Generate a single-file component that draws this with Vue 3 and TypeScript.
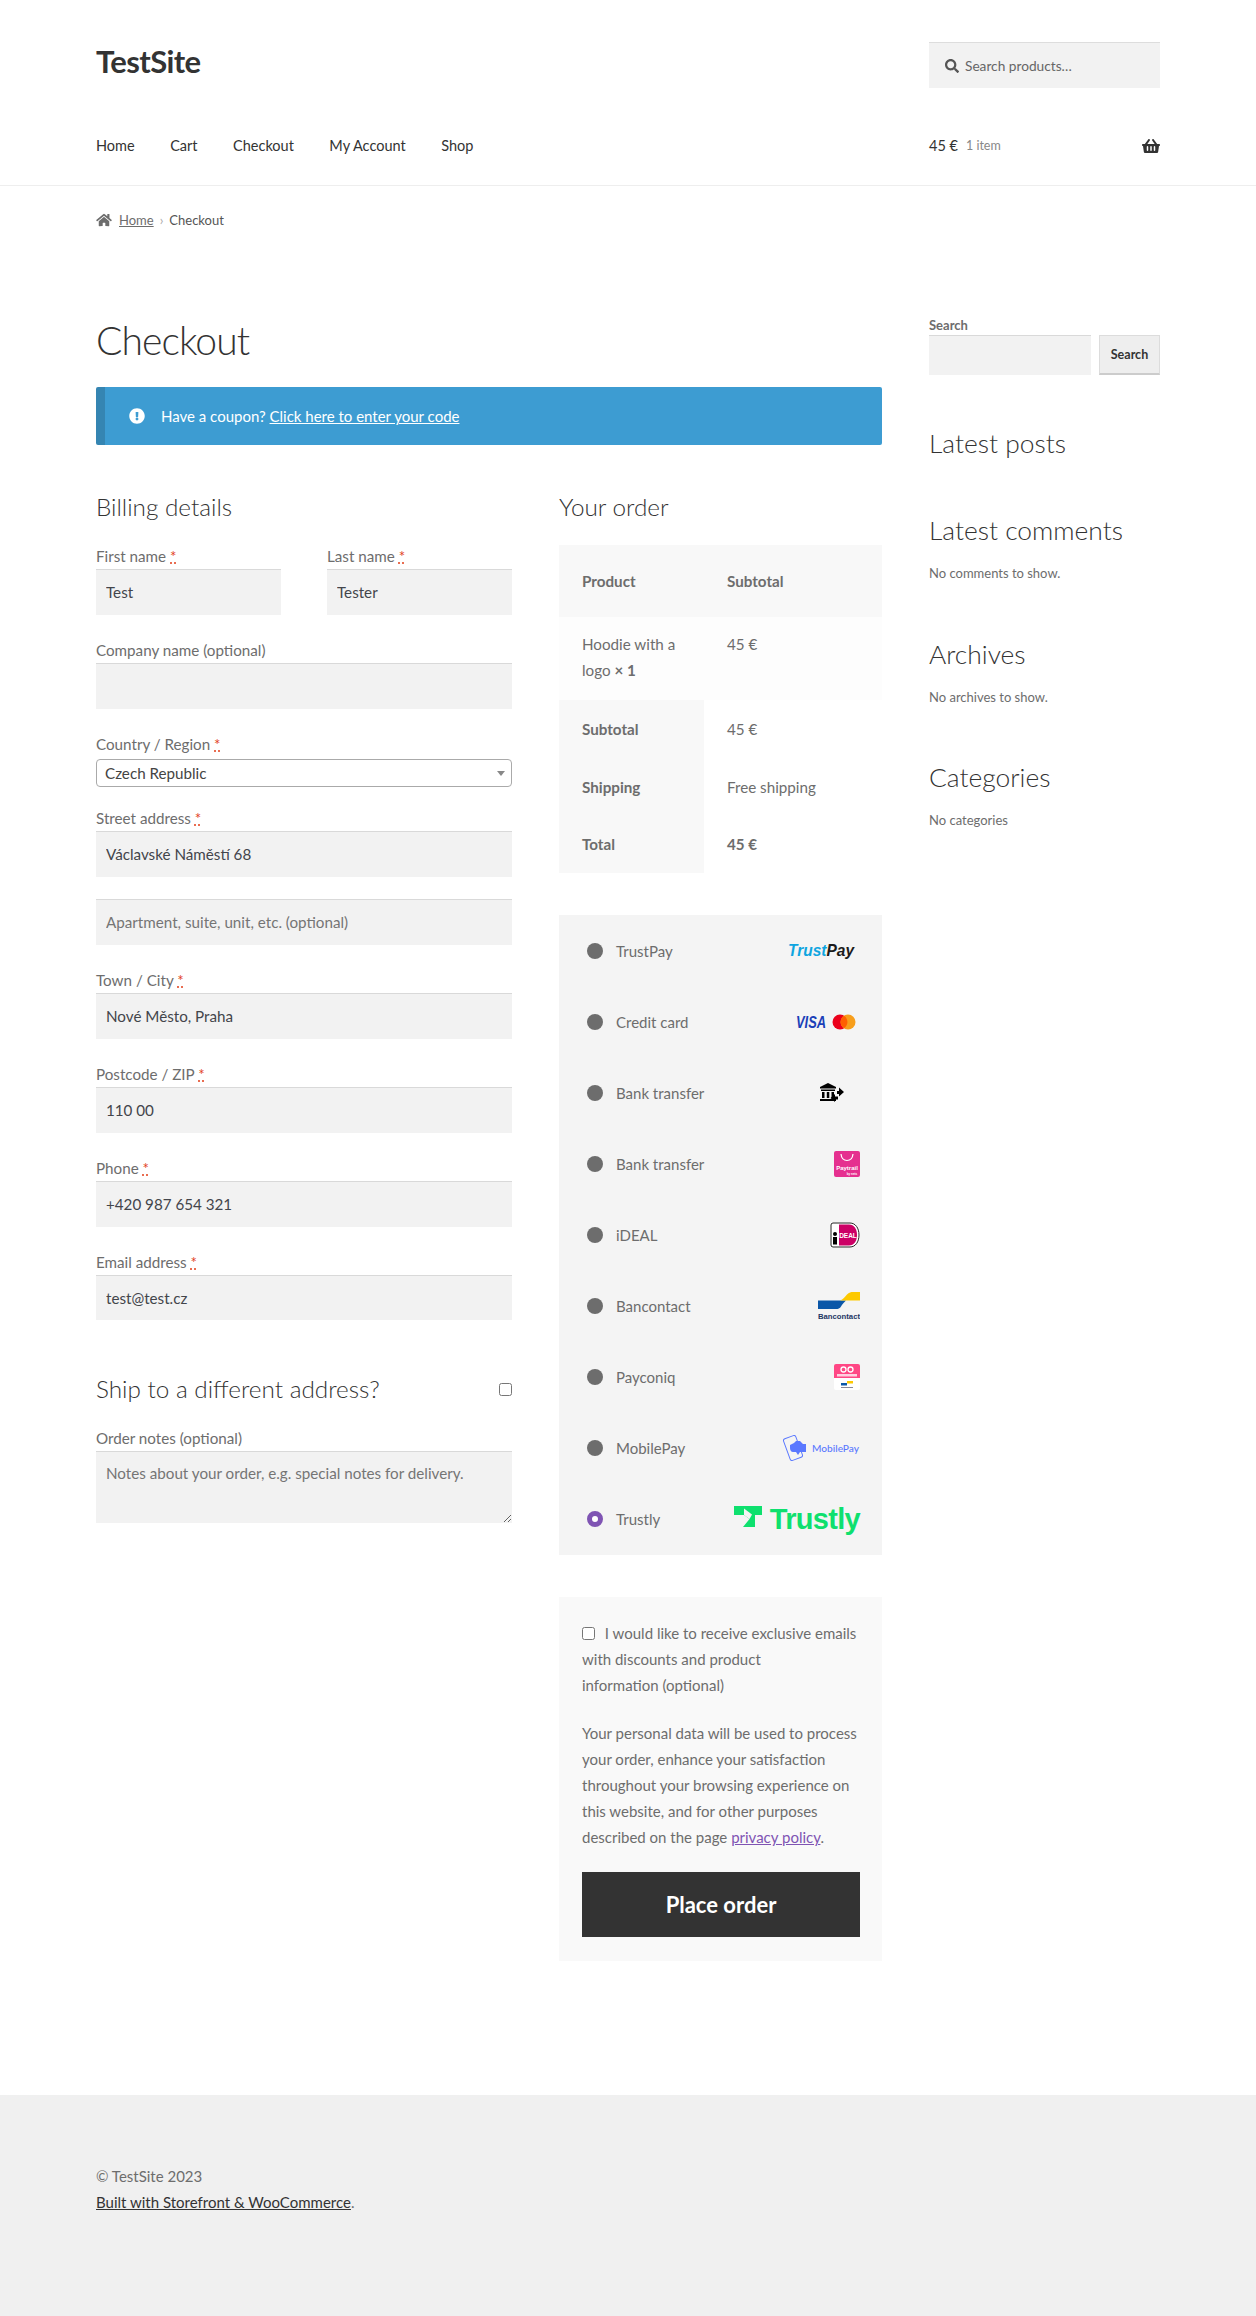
<script setup lang="ts">
interface Field {
  label: string
  required?: boolean
  value?: string
  placeholder?: string
}
const navItems: string[] = ['Home', 'Cart', 'Checkout', 'My Account', 'Shop']
const afterAddress: Field[] = [
  { label: 'Town / City', required: true, value: 'Nové Město, Praha' },
  { label: 'Postcode / ZIP', required: true, value: '110 00' },
  { label: 'Phone', required: true, value: '+420 987 654 321' },
  { label: 'Email address', required: true, value: 'test@test.cz' }
]
const methods: string[] = ['TrustPay', 'Credit card', 'Bank transfer', 'Bank transfer', 'iDEAL', 'Bancontact', 'Payconiq', 'MobilePay', 'Trustly']
</script>

<template>
  <div class="page">
    <header class="site-header">
      <div class="wrap brand-row">
        <div class="logo">TestSite</div>
        <div class="search-box">
          <svg class="ic-search" viewBox="0 0 512 512"><path d="M505 442.7L405.3 343c-4.5-4.5-10.6-7-17-7H372c27.6-35.3 44-79.7 44-128C416 93.1 322.9 0 208 0S0 93.1 0 208s93.1 208 208 208c48.3 0 92.7-16.4 128-44v16.3c0 6.4 2.5 12.5 7 17l99.7 99.7c9.4 9.4 24.6 9.4 33.9 0l28.3-28.3c9.4-9.4 9.4-24.6.1-34zM208 336c-70.7 0-128-57.2-128-128 0-70.7 57.2-128 128-128 70.7 0 128 57.2 128 128 0 70.7-57.2 128-128 128z"/></svg>
          <span>Search products…</span>
        </div>
      </div>
      <div class="wrap nav-row">
        <nav class="nav"><a v-for="n in navItems" :key="n">{{ n }}</a></nav>
        <div class="cart">
          <span class="amount">45 €</span><span class="count">1 item</span>
          <svg class="ic-basket" viewBox="0 0 576 512"><path d="M576 216v16c0 13.255-10.745 24-24 24h-8l-26.113 182.788C514.509 462.435 494.257 480 470.37 480H105.63c-23.887 0-44.139-17.565-47.518-41.212L32 256h-8c-13.255 0-24-10.745-24-24v-16c0-13.255 10.745-24 24-24h67.341l106.78-146.821c10.395-14.292 30.407-17.453 44.701-7.058 14.293 10.395 17.453 30.408 7.058 44.701L170.477 192h235.046L326.12 82.821c-10.395-14.292-7.234-34.306 7.059-44.701 14.291-10.395 34.306-7.235 44.701 7.058L484.659 192H552c13.255 0 24 10.745 24 24zM312 392V280c0-13.255-10.745-24-24-24s-24 10.745-24 24v112c0 13.255 10.745 24 24 24s24-10.745 24-24zm112 0V280c0-13.255-10.745-24-24-24s-24 10.745-24 24v112c0 13.255 10.745 24 24 24s24-10.745 24-24zm-224 0V280c0-13.255-10.745-24-24-24s-24 10.745-24 24v112c0 13.255 10.745 24 24 24s24-10.745 24-24z"/></svg>
        </div>
      </div>
    </header>

    <div class="wrap crumbs">
      <svg class="ic-home" viewBox="0 0 576 512"><path d="M280.37 148.26L96 300.11V464a16 16 0 0 0 16 16l112.06-.29a16 16 0 0 0 15.92-16V368a16 16 0 0 1 16-16h64a16 16 0 0 1 16 16v95.64a16 16 0 0 0 16 16.05L464 480a16 16 0 0 0 16-16V300L295.67 148.26a12.19 12.19 0 0 0-15.3 0zM571.6 251.47L488 182.56V44.05a12 12 0 0 0-12-12h-56a12 12 0 0 0-12 12v72.61L318.47 43a48 48 0 0 0-61 0L4.34 251.47a12 12 0 0 0-1.6 16.9l25.5 31A12 12 0 0 0 45.15 301l235.22-193.74a12.19 12.19 0 0 1 15.3 0L530.9 301a12 12 0 0 0 16.9-1.6l25.5-31a12 12 0 0 0-1.7-16.93z"/></svg>
      <a>Home</a><span class="sep">›</span><span>Checkout</span>
    </div>

    <div class="wrap columns">
      <main class="content">
        <h1>Checkout</h1>
        <div class="notice">
          <svg class="ic-info" viewBox="0 0 512 512"><path d="M504 256c0 136.997-111.043 248-248 248S8 392.997 8 256C8 119.083 119.043 8 256 8s248 111.083 248 248zm-248 50c-25.405 0-46 20.595-46 46s20.595 46 46 46 46-20.595 46-46-20.595-46-46-46zm-43.673-165.346l7.418 136c.347 6.364 5.609 11.346 11.982 11.346h48.546c6.373 0 11.635-4.982 11.982-11.346l7.418-136c.375-6.874-5.098-12.654-11.982-12.654h-63.383c-6.884 0-12.356 5.78-11.981 12.654z"/></svg>
          <span>Have a coupon? <a>Click here to enter your code</a></span>
        </div>

        <div class="checkout">
          <section class="billing">
            <h3>Billing details</h3>
            <div class="name-row">
              <div class="field">
                <label>First name <abbr>*</abbr></label>
                <input class="text" value="Test" />
              </div>
              <div class="field">
                <label>Last name <abbr>*</abbr></label>
                <input class="text" value="Tester" />
              </div>
            </div>
            <div class="field">
              <label>Company name (optional)</label>
              <input class="text" />
            </div>
            <div class="field country">
              <label>Country / Region <abbr>*</abbr></label>
              <div class="select-wrap">
                <select class="select"><option>Czech Republic</option></select>
              </div>
            </div>
            <div class="field street">
              <label>Street address <abbr>*</abbr></label>
              <input class="text" value="Václavské Náměstí 68" />
              <input class="text second" placeholder="Apartment, suite, unit, etc. (optional)" />
            </div>
            <div v-for="f in afterAddress" :key="f.label" class="field">
              <label>{{ f.label }} <abbr v-if="f.required">*</abbr></label>
              <input class="text" :value="f.value" />
            </div>
            <div class="ship">
              <h3>Ship to a different address?</h3>
              <input type="checkbox" class="check" />
            </div>
            <div class="field notes">
              <label>Order notes (optional)</label>
              <textarea class="text area" placeholder="Notes about your order, e.g. special notes for delivery."></textarea>
            </div>
          </section>

          <section class="order">
            <h3>Your order</h3>
            <table class="table">
              <thead>
                <tr><th>Product</th><th>Subtotal</th></tr>
              </thead>
              <tbody>
                <tr class="item"><td>Hoodie with a logo <strong>× 1</strong></td><td>45 €</td></tr>
              </tbody>
              <tfoot>
                <tr><th>Subtotal</th><td>45 €</td></tr>
                <tr><th>Shipping</th><td>Free shipping</td></tr>
                <tr><th>Total</th><td><strong>45 €</strong></td></tr>
              </tfoot>
            </table>

            <ul class="methods">
              <li v-for="(m, i) in methods" :key="i" class="method">
                <span class="radio" :class="{ on: i === 8 }"></span>
                <span class="m-label">{{ m }}</span>
                <svg v-if="i === 0" class="logo-svg" width="72" height="24" viewBox="0 0 72 24">
                  <text x="0" y="17" class="tp" textLength="66" lengthAdjust="spacingAndGlyphs"><tspan fill="#0ea5e0">Trust</tspan><tspan fill="#1b1b1b">Pay</tspan></text>
                </svg>
                <svg v-else-if="i === 1" class="logo-svg" width="64" height="20" viewBox="0 0 64 20">
                  <text x="0" y="15.500" class="visa" textLength="30" lengthAdjust="spacingAndGlyphs">VISA</text>
                  <circle cx="44" cy="10" r="7.500" fill="#eb001b"/>
                  <circle cx="52" cy="10" r="7.500" fill="#f79e1b"/>
                  <path d="M48 3.700a7.500 7.500 0 0 1 0 12.600a7.500 7.500 0 0 1 0-12.600z" fill="#ff5f00"/>
                </svg>
                <svg v-else-if="i === 2" class="logo-svg" width="40" height="20" viewBox="0 0 40 20">
                  <path d="M8 0l8 4v1.500H0V4zM1 6.500h14V8H1zM2 9h2.500v6H2zM6.800 9h2.500v6H6.800zM11.500 9H14v6h-2.500zM0 16h16v2H0z" fill="#000"/>
                  <path d="M17 8h2V4.500l5 4.500-5 4.500V11h-2zM18 13.500h-3V11l-4.500 4 4.500 4v-2.500h3z" fill="#000"/>
                </svg>
                <svg v-else-if="i === 3" class="logo-svg" width="26" height="26" viewBox="0 0 26 26">
                  <rect width="26" height="26" rx="2" fill="#e5308f"/>
                  <path d="M7 3c.5 5 3 6.500 6 6.500s5.500-1.500 6-6.500" fill="none" stroke="#fff" stroke-width="1.200"/>
                  <text x="13" y="19" class="pt">Paytrail</text>
                  <text x="18" y="24" class="pt2">by nets</text>
                </svg>
                <svg v-else-if="i === 4" class="logo-svg" width="30" height="26" viewBox="0 0 30 26">
                  <path d="M0 2a2 2 0 0 1 2-2h18c6 0 10 5 10 13s-4 13-10 13H2a2 2 0 0 1-2-2z" fill="#fff"/>
                  <path d="M1 3a2 2 0 0 1 2-2h17c5.500 0 9 5 9 12s-3.500 12-9 12H3a2 2 0 0 1-2-2z" fill="none" stroke="#222" stroke-width="1"/>
                  <path d="M9 2.500h10c5 0 8 4.500 8 10.500s-3 10.500-8 10.500H9z" fill="#cc0066"/>
                  <text x="18" y="15.500" class="id">DEAL</text>
                  <circle cx="5" cy="12" r="2" fill="#000"/>
                  <rect x="3" y="15" width="4" height="7.500" fill="#000"/>
                </svg>
                <svg v-else-if="i === 5" class="logo-svg" width="42" height="27" viewBox="0 0 42 27">
                  <path d="M0 8.500H28c-2 2-4 4-5 6-1 2-3 2.500-5 2.500H0z" fill="#0b57a8"/>
                  <path d="M42 0v8.500H22c3-1 5-4 7-6 2-2 4-2.500 6-2.500z" fill="#fdc900"/>
                  <text x="0" y="26.500" class="bc" textLength="42" lengthAdjust="spacingAndGlyphs">Bancontact</text>
                </svg>
                <svg v-else-if="i === 6" class="logo-svg" width="26" height="26" viewBox="0 0 26 26">
                  <path d="M2 0h22a2 2 0 0 1 2 2v14H0V2a2 2 0 0 1 2-2z" fill="#ff4785"/>
                  <path d="M0 14h26v10a2 2 0 0 1-2 2H2a2 2 0 0 1-2-2z" fill="#fff"/>
                  <circle cx="9.500" cy="5.500" r="2.500" fill="none" stroke="#fff" stroke-width="1.300"/>
                  <circle cx="16.500" cy="5.500" r="2.500" fill="none" stroke="#fff" stroke-width="1.300"/>
                  <rect x="3" y="10" width="20" height="2.500" fill="#ffd0e0"/>
                  <rect x="7" y="19" width="6" height="2.500" fill="#0b57a8"/>
                  <rect x="13" y="17" width="6" height="2.500" fill="#fdc900"/>
                  <rect x="7" y="23" width="12" height="1" fill="#889"/>
                </svg>
                <svg v-else-if="i === 7" class="logo-svg" width="78" height="26" viewBox="0 0 78 26">
                  <rect x="4.500" y="1.500" width="13" height="23" rx="2" transform="rotate(-20 11 13)" fill="none" stroke="#5a78ff" stroke-width="1"/>
                  <path d="M8 10l4-2 2-2h4l3 3h3v8h-6l-2 3-2-3h-3c-2 0-3-2-3-4z" fill="#5a78ff"/>
                  <text x="30" y="17" class="mp" textLength="47" lengthAdjust="spacingAndGlyphs">MobilePay</text>
                </svg>
                <span v-else class="trustly">
                  <svg width="28" height="21" viewBox="0 0 28 21">
                    <path d="M0 0H28V9H21V21H9L15.500 13 10 9H0Z" fill="#0ee06e"/>
                    <path d="M10 9V2.500L18 8.500 15.500 13Z" fill="#f4f4f4"/>
                  </svg>
                  <span>Trustly</span>
                </span>
              </li>
            </ul>

            <div class="terms">
              <p class="opt"><input type="checkbox" class="check small" /> I would like to receive exclusive emails with discounts and product<br />information (optional)</p>
              <p class="privacy">Your personal data will be used to process your order, enhance your satisfaction throughout your browsing experience on this website, and for other purposes described on the page <a>privacy policy</a>.</p>
              <button class="place">Place order</button>
            </div>
          </section>
        </div>
      </main>

      <aside class="sidebar">
        <div class="w-search">
          <div class="w-label">Search</div>
          <div class="w-row">
            <input class="text side-input" />
            <button class="side-btn">Search</button>
          </div>
        </div>
        <h4 class="first">Latest posts</h4>
        <h4>Latest comments</h4>
        <p>No comments to show.</p>
        <h4>Archives</h4>
        <p>No archives to show.</p>
        <h4>Categories</h4>
        <p>No categories</p>
      </aside>
    </div>

    <footer class="footer">
      <div class="wrap">
        <div>© TestSite 2023</div>
        <div><a>Built with Storefront &amp; WooCommerce</a>.</div>
      </div>
    </footer>
  </div>
</template>

<style scoped>
.page {
  width: 1256px;
  height: 2316px;
  position: relative;
  font-family: Lato, "Open Sans", sans-serif;
  font-size: 15px;
  line-height: 26px;
  color: #6d6d6d;
  background: #fff;
  overflow: hidden;
  display: flex;
  flex-direction: column;
}
.wrap { width: 1064px; margin: 0 96px; box-sizing: border-box; }
.site-header { border-bottom: 1px solid #eee; height: 186px; box-sizing: border-box; }
.brand-row { display: flex; justify-content: space-between; padding-top: 42px; }
.logo { font-size: 31px; font-weight: 700; color: #333; line-height: 38px; letter-spacing: -0.6px; }
.search-box {
  width: 231px; height: 46px; box-sizing: border-box; background: #f2f2f2;
  border-top: 1px solid #ddd; display: flex; align-items: center; padding-left: 16px;
  font-size: 13.7px; color: #666;
}
.ic-search { width: 14px; height: 14px; fill: #555; margin-right: 6px; }
.nav-row { display: flex; justify-content: space-between; align-items: center; margin-top: 45px; height: 26px; }
.nav { display: flex; gap: 35.5px; color: #333; font-size: 14.5px; }
.nav a { color: #333; }
.cart { width: 231px; display: flex; align-items: center; color: #333; }
.amount { font-size: 14.5px; }
.count { font-size: 12.5px; color: #888; margin-left: 8px; }
.ic-basket { width: 18px; height: 16px; margin-left: auto; fill: #333; }
.crumbs { display: flex; align-items: center; margin-top: 21px; height: 26px; font-size: 13px; color: #555; }
.crumbs a { text-decoration: underline; color: #6d6d6d; }
.ic-home { width: 16px; height: 14px; fill: #6d6d6d; margin-right: 7px; }
.sep { margin: 0 6px; color: #aaa; }
.columns { display: flex; justify-content: space-between; margin-top: 0; }
.content { width: 786px; }
h1 { margin: 84px 0 23px; height: 47px; line-height: 47px; font-size: 39px; font-weight: 300; color: #333; letter-spacing: -0.9px; }
.notice {
  height: 58px; box-sizing: border-box; background: #3d9cd2; border-left: 9px solid #3585b2;
  border-radius: 2px; display: flex; align-items: center; padding-left: 24px; color: #fff; font-size: 15px;
}
.notice a { color: #fff; text-decoration: underline; }
.ic-info { width: 16px; height: 16px; fill: #fff; margin-right: 16px; }
.checkout { display: flex; justify-content: space-between; margin-top: 43px; }
.billing { width: 416px; }
.order { width: 323px; }
h3 { margin: 0; font-size: 24.3px; font-weight: 300; color: #333; line-height: 38px; }
.name-row { display: flex; justify-content: space-between; margin-top: 17px; }
.name-row .field { width: 185px; margin: 0; }
.field { margin-top: 22.4px; display: flex; flex-direction: column; }
label { height: 26px; line-height: 26px; font-size: 15.2px; color: #6d6d6d; }
abbr { color: #e2401c; text-decoration: underline dotted #e2401c; }
.text {
  display: block; width: 100%; height: 45.6px; box-sizing: border-box; border: 0; outline: 0; margin: 0;
  border-top: 1px solid #d9d9d9; background: #f2f2f2; padding: 0 10px; font: inherit; font-size: 15.2px;
  color: #43454b;
}
.text::placeholder { color: #757575; opacity: 1; }
.country { margin-top: 22.4px; }
.country label { margin-bottom: 2px; }
.select-wrap { position: relative; }
.select-wrap::after {
  content: ""; position: absolute; right: 7px; top: 12px;
  border: 4px solid transparent; border-top: 5px solid #888; border-bottom: 0;
}
.select {
  display: block; width: 100%; height: 28px; box-sizing: border-box; appearance: none; background: #fff;
  border: 1px solid #aaa; border-radius: 4px; padding: 0 0 0 8px; font: inherit; font-size: 15.2px; color: #444;
}
.street { margin-top: 18px; }
.second { margin-top: 22.4px; }
.ship { display: flex; justify-content: space-between; align-items: center; margin-top: 50px; }
.check { margin: 0; width: 13px; height: 13px; }
.field.notes { margin-top: 17px; }
.text.area { height: 72px; padding-top: 8px; resize: both; line-height: 26px; }
.table { width: 323px; border-collapse: collapse; margin-top: 19px; table-layout: fixed; font-size: 15.2px; }
.table th, .table td { text-align: left; padding: 0 23px; vertical-align: middle; }
.table th:first-child, .table td:first-child { width: 145px; box-sizing: border-box; }
.table thead th { height: 72px; background: #f8f8f8; font-weight: 700; }
.table .item td { height: 83px; box-sizing: border-box; background: #fdfdfd; vertical-align: top; padding-top: 14px; }
.table tfoot th { height: 57.700px; background: #f8f8f8; font-weight: 700; }
.table tfoot td { background: #fff; }
.methods { list-style: none; margin: 42px 0 0; padding: 0 22px 1px 28px; background: #f4f4f4; }
.method { height: 71px; display: flex; align-items: center; font-size: 15px; }
.radio { width: 16px; height: 16px; border-radius: 50%; background: #6d6d6d; margin-right: 13px; flex: none; }
.radio.on { background: #fff; border: 5px solid #7f54b3; box-sizing: border-box; }
.m-label { flex: 1; }
.logo-svg { flex: none; display: block; }
.tp { font: italic 700 17px "Liberation Sans", sans-serif; }
.visa { font: italic 700 16px "Liberation Sans", sans-serif; fill: #1a3fb8; }
.pt { font: 700 6px "Liberation Sans", sans-serif; fill: #fff; text-anchor: middle; }
.pt2 { font: 700 3px "Liberation Sans", sans-serif; fill: #fff; text-anchor: middle; }
.id { font: 700 6.500px "Liberation Sans", sans-serif; fill: #fff; text-anchor: middle; }
.bc { font: 700 7.800px "Liberation Sans", sans-serif; fill: #1e3764; }
.mp { font: 500 10px Lato, sans-serif; fill: #5a78ff; }
.trustly { display: flex; align-items: flex-start; gap: 8px; color: #0ee06e; font: 700 29px/28px "Liberation Sans", sans-serif; letter-spacing: -0.7px; height: 28px; }
.trustly svg { display: block; margin-top: 1px; }
.terms { margin-top: 42px; background: #f9f9f9; padding: 23px 22px 24px 23px; height: 364px; box-sizing: border-box; font-size: 15px; }
.terms p { margin: 0; }
.terms .opt { margin-bottom: 22px; }
.small { display: inline-block; margin-right: 6px; vertical-align: -1px; }
.privacy a { color: #7f54b3; text-decoration: underline; }
.place {
  display: block; width: 100%; height: 65px; margin-top: 22px; border: 0; background: #333; color: #fff;
  font: 700 22px Lato, sans-serif;
}
.sidebar { width: 231px; padding-top: 82px; font-size: 13px; }
.w-label { font-weight: 700; line-height: 20px; color: #6d6d6d; height: 20px; }
.w-row { display: flex; justify-content: space-between; }
.text.side-input { width: 162px; height: 40px; }
.side-btn {
  width: 61px; height: 40px; box-sizing: border-box; border: 1px solid #dcdcdc; border-bottom: 2px solid #ccc; background: #eee;
  font: 700 12.5px Lato, sans-serif; color: #333; padding: 0;
}
h4 { margin: 49px 0 0; font-size: 26.4px; font-weight: 300; color: #333; line-height: 38px; }
h4.first { margin-top: 49px; }
.sidebar p { margin: 11px 0 0; height: 26px; }
.sidebar p + h4 { margin-top: 48.5px; }
.footer { margin-top: auto; height: 221px; background: #f0f0f0; padding-top: 68px; box-sizing: border-box; font-size: 15px; color: #6d6d6d; }
.footer a { color: #333; text-decoration: underline; }
</style>

<style>
body { margin: 0; }
</style>
